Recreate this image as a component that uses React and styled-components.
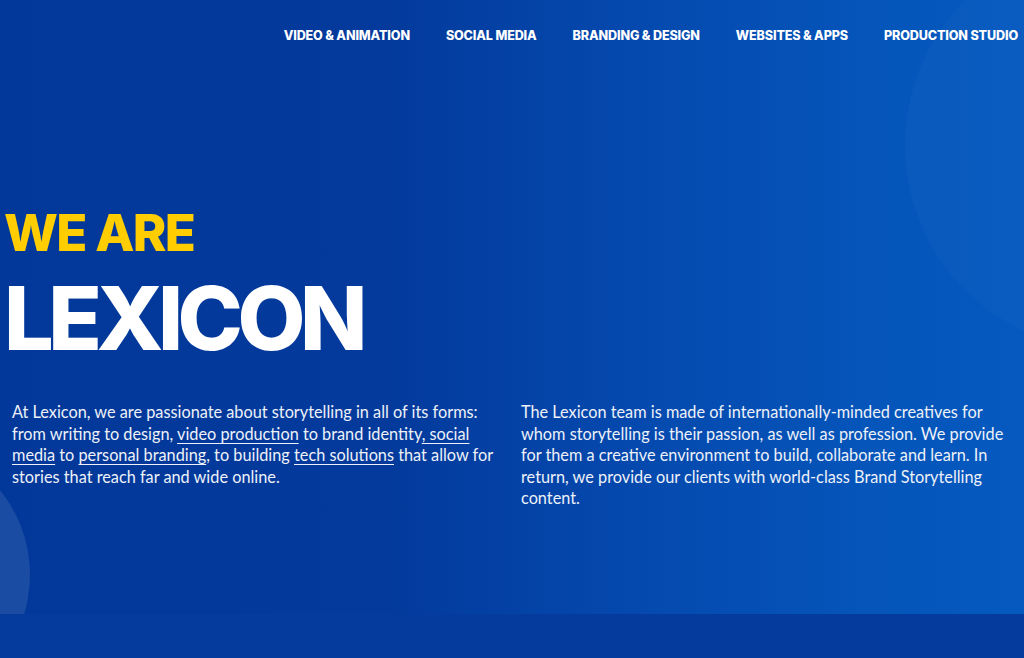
import React from "react";
import styled, { createGlobalStyle } from "styled-components";

const Global = createGlobalStyle`
  html, body { margin: 0; padding: 0; }
  body {
    background: #043a9b;
    overflow: hidden;
    font-family: "Lato", "Liberation Sans", sans-serif;
  }
`;

const Page = styled.div`
  width: 1024px;
  height: 658px;
  display: flex;
  flex-direction: column;
  overflow: hidden;
`;

const Hero = styled.section`
  position: relative;
  height: 614px;
  flex: none;
  overflow: hidden;
  background: linear-gradient(90deg, #02389a 0%, #033a9c 38%, #0549ae 62%, #0555ba 85%, #0559bf 100%);
  display: flex;
  flex-direction: column;
`;

const Bubble = styled.div`
  position: absolute;
  border-radius: 50%;
  pointer-events: none;
  left: ${(p) => p.$x}px;
  top: ${(p) => p.$y}px;
  width: ${(p) => p.$r * 2}px;
  height: ${(p) => p.$r * 2}px;
  background: rgba(255, 255, 255, ${(p) => p.$alpha});
`;

const Nav = styled.nav`
  position: relative;
  display: flex;
  justify-content: flex-end;
  gap: 36px;
  padding: 28px 6px 0 0;
`;

const NavLink = styled.a`
  font-family: "Inter", "Liberation Sans", sans-serif;
  font-weight: 800;
  font-size: 12.6px;
  letter-spacing: -0.15px;
  color: #ffffff;
  text-decoration: none;
  line-height: 16px;
  white-space: nowrap;
`;

const Title = styled.div`
  position: relative;
  margin-top: 159px;
  padding-left: 4px;
  font-family: "Inter", "Liberation Sans", sans-serif;
  font-weight: 800;
`;

const Kicker = styled.div`
  color: #ffcd00;
  font-size: 51px;
  line-height: 60px;
  letter-spacing: -1.7px;
`;

const Headline = styled.h1`
  margin: 7px 0 0;
  color: #ffffff;
  font-size: 88px;
  line-height: 96px;
  letter-spacing: -5.5px;
  font-weight: 800;
`;

const Columns = styled.div`
  position: relative;
  display: grid;
  grid-template-columns: 488px 488px;
  column-gap: 21px;
  padding: 35px 0 0 12px;
`;

const Para = styled.p`
  margin: 0;
  color: #eef1f8;
  font-size: 16.3px;
  line-height: 21.5px;
`;

const TextLink = styled.a`
  color: inherit;
  text-decoration: underline;
  text-underline-offset: 3px;
  text-decoration-thickness: 1px;
`;

const Band = styled.div`
  flex: 1;
  background: #053b9d;
`;

export default function App() {
  const links = [
    "VIDEO & ANIMATION",
    "SOCIAL MEDIA",
    "BRANDING & DESIGN",
    "WEBSITES & APPS",
    "PRODUCTION STUDIO",
  ];
  return (
    <Page>
      <Global />
      <Hero>
        <Bubble $x={905} $y={-60} $r={205} $alpha={0.025} />
        <Bubble $x={-240} $y={440} $r={135} $alpha={0.1} />
        <Nav>
          {links.map((l) => (
            <NavLink key={l} href="#">
              {l}
            </NavLink>
          ))}
        </Nav>
        <Title>
          <Kicker>WE ARE</Kicker>
          <Headline>LEXICON</Headline>
        </Title>
        <Columns>
          <Para>
            At Lexicon, we are passionate about storytelling in all of its forms: from writing to
            design, <TextLink href="#">video production</TextLink> to brand identity
            <TextLink href="#">, social media</TextLink> to{" "}
            <TextLink href="#">personal branding</TextLink>, to building{" "}
            <TextLink href="#">tech solutions</TextLink> that allow for stories that reach far and
            wide online.
          </Para>
          <Para>
            The Lexicon team is made of internationally-minded creatives for whom storytelling is
            their passion, as well as profession. We provide for them a creative environment to
            build, collaborate and learn. In return, we provide our clients with world-class Brand
            Storytelling content.
          </Para>
        </Columns>
      </Hero>
      <Band />
    </Page>
  );
}
